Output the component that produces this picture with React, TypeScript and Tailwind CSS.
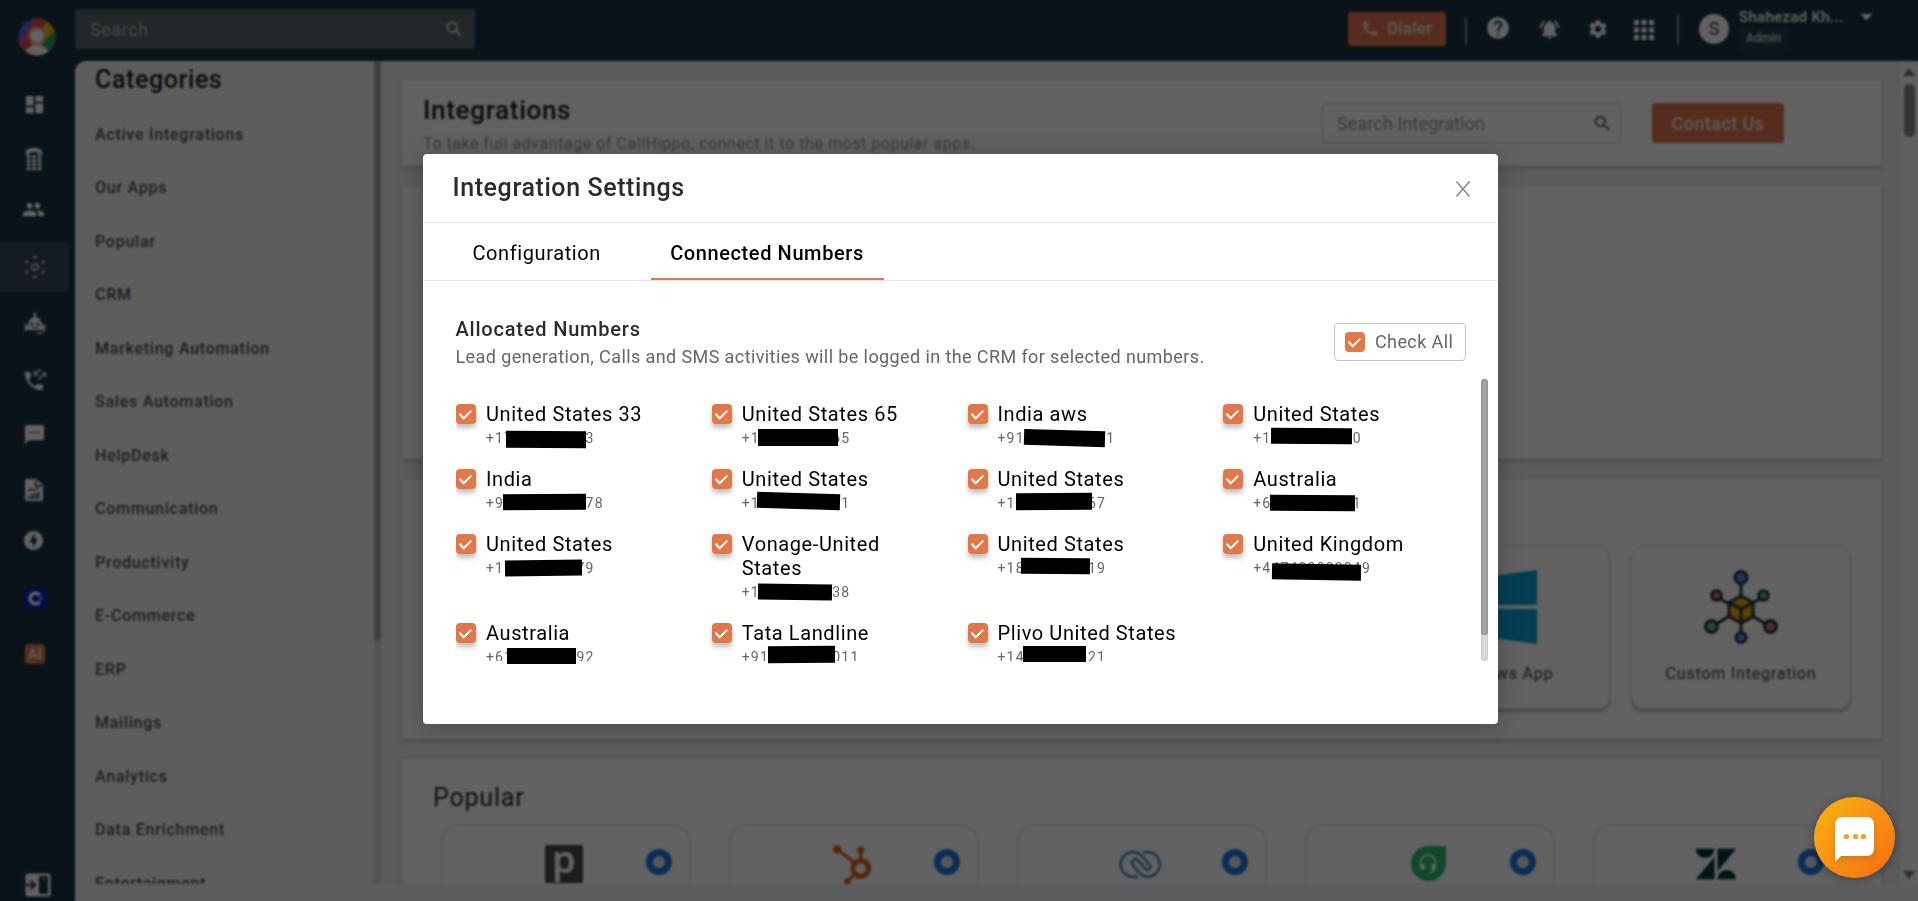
import type { ReactNode } from 'react';
import {
  MdApps,
  MdArrowDropDown,
  MdCall,
  MdDashboard,
  MdHelp,
  MdNotificationsActive,
  MdOfflineBolt,
  MdPeople,
  MdSearch,
  MdSettings,
  MdSms,
} from 'react-icons/md';
import { SiHubspot, SiZendesk } from 'react-icons/si';

const categories = [
  'Active Integrations',
  'Our Apps',
  'Popular',
  'CRM',
  'Marketing Automation',
  'Sales Automation',
  'HelpDesk',
  'Communication',
  'Productivity',
  'E-Commerce',
  'ERP',
  'Mailings',
  'Analytics',
  'Data Enrichment',
  'Entertainment',
];

const numbers = [
  { name: 'United States 33', number: '+17000000003' },
  { name: 'United States 65', number: '+10000000065' },
  { name: 'India aws', number: '+910000000001' },
  { name: 'United States', number: '+10000000000' },
  { name: 'India', number: '+910000000078' },
  { name: 'United States', number: '+10000000001' },
  { name: 'United States', number: '+10000000067' },
  { name: 'Australia', number: '+61000000001' },
  { name: 'United States', number: '+10000000079' },
  { name: 'Vonage-United States', number: '+10000000038' },
  { name: 'United States', number: '+18000000019' },
  { name: 'United Kingdom', number: '+447402000049' },
  { name: 'Australia', number: '+61000000092' },
  { name: 'Tata Landline', number: '+910000000011' },
  { name: 'Plivo United States', number: '+14000000021' },
];

// Bars that hide the middle digits, measured from the modal's top left corner
const masks = [
  { x: 82.5, y: 277, w: 79.5, h: 16.5, r: 0.3 },
  { x: 335.3, y: 275, w: 79.5, h: 16.5, r: 0 },
  { x: 601.3, y: 275.6, w: 80.5, h: 16, r: 1.6 },
  { x: 848, y: 273.8, w: 81.3, h: 16.3, r: 0.5 },
  { x: 80, y: 340.3, w: 83, h: 16.3, r: -0.3 },
  { x: 334, y: 338.5, w: 82.5, h: 16, r: 1.6 },
  { x: 592.6, y: 339.2, w: 76.3, h: 16.5, r: -0.2 },
  { x: 847, y: 341.2, w: 85, h: 16.3, r: 0.2 },
  { x: 81.5, y: 405.5, w: 77.3, h: 16.3, r: -0.7 },
  { x: 335.3, y: 430.2, w: 74.3, h: 16.3, r: 0.6 },
  { x: 597.7, y: 404.3, w: 69.3, h: 16.3, r: 0.6 },
  { x: 849, y: 409.7, w: 88.7, h: 16, r: 1 },
  { x: 83.5, y: 494, w: 69, h: 16.3, r: 0 },
  { x: 345.3, y: 492, w: 66.5, h: 16.5, r: -0.3 },
  { x: 600.4, y: 492, w: 62.6, h: 16.3, r: 0 },
];

function OfficePhoneIcon() {
  return (
    <svg className="h-6 w-5" viewBox="0 0 20 24" fill="currentColor">
      <path d="M1.5 7.5C1 3 5 .8 10 .8s9 2.200 8.500 6.700h-4.300V5.200H5.800v2.300z" />
      {[9, 13, 17, 21].map((y) =>
        [2.6, 8, 13.400].map((x) => <rect key={`${x}-${y}`} x={x} y={y - 0.700} width="4" height="3" rx="0.8" />),
      )}
    </svg>
  );
}

function HubIcon() {
  return (
    <svg className="h-6 w-6" viewBox="0 0 24 24" fill="currentColor">
      <circle cx="12" cy="12" r="3" fill="none" stroke="currentColor" strokeWidth="1.8" />
      <circle cx="12" cy="2.200" r="1.700" />
      <circle cx="12" cy="21.800" r="1.700" />
      <circle cx="3.800" cy="7" r="1.700" />
      <circle cx="20.200" cy="7" r="1.700" />
      <circle cx="3.800" cy="17" r="1.700" />
      <circle cx="20.200" cy="17" r="1.700" />
    </svg>
  );
}

function BotIcon() {
  return (
    <svg className="h-6 w-6" viewBox="0 0 24 24">
      <circle cx="12" cy="3" r="1.500" fill="currentColor" />
      <path d="M12 3v4" stroke="currentColor" strokeWidth="1.500" />
      <path d="M4.500 19C4.500 10 7.500 6 12 6s7.500 4 7.500 13z" fill="currentColor" />
      <rect x="1.800" y="13" width="2.400" height="7" rx="1.200" fill="currentColor" />
      <rect x="19.800" y="13" width="2.400" height="7" rx="1.200" fill="currentColor" />
      <circle cx="9" cy="13" r="1.500" fill="#1a3443" />
      <circle cx="15" cy="13" r="1.500" fill="#1a3443" />
      <path d="M9 16.500h6" stroke="#1a3443" strokeWidth="1.200" />
      <path d="M20.500 20.500c-1 1.600-3 2-7 2" stroke="currentColor" strokeWidth="1.200" fill="none" />
    </svg>
  );
}

function CallLogIcon() {
  return (
    <svg className="h-6 w-6" viewBox="0 0 24 24">
      <path
        transform="translate(-1 2)"
        d="M20 15.500c-1.200 0-2.500-.2-3.600-.6-.3-.1-.7 0-1 .2l-2.200 2.200a15 15 0 0 1-6.600-6.600l2.200-2.200c.3-.3.400-.7.200-1C8.700 6.500 8.500 5.200 8.500 4c0-.600-.400-1-1-1H4c-.600 0-1 .400-1 1 0 9.400 7.600 17 17 17 .600 0 1-.400 1-1v-3.500c0-.600-.400-1-1-1z"
        fill="currentColor"
      />
      <path d="M17.500 2l-6 5.500M11.500 4v3.800h4M15.500 12.500l6.500-6M18 6.200h4.200V10" fill="none" stroke="currentColor" strokeWidth="1.300" />
    </svg>
  );
}

function ReportIcon() {
  return (
    <svg className="h-6 w-5" viewBox="0 0 20 24">
      <path d="M3 1h9l7 6v14a2 2 0 0 1-2 2H3a2 2 0 0 1-2-2V3a2 2 0 0 1 2-2z" fill="currentColor" />
      <path d="M11.500 2.500v5.500H18" stroke="#1a3443" strokeWidth="1.500" fill="none" />
      <path d="M4 13l3-2 3 1.500 5-3" stroke="#1a3443" strokeWidth="1.200" fill="none" />
      <path d="M5.200 21v-3M8.400 21v-5M11.600 21v-6M14.600 21v-7" stroke="#1a3443" strokeWidth="1.900" />
    </svg>
  );
}

const navItems: { icon: ReactNode; className: string }[] = [
  { icon: <MdDashboard className="h-[23px] w-[23px]" />, className: 'mt-[18px]' },
  { icon: <OfficePhoneIcon />, className: 'mt-[5px] pr-0.5' },
  { icon: <MdPeople className="h-[23px] w-[23px]" />, className: 'pr-0.5' },
  { icon: <HubIcon />, className: 'mt-2 bg-[#36485a] text-[#c8c8cc]' },
  { icon: <BotIcon />, className: 'mt-1.5' },
  { icon: <CallLogIcon />, className: 'mt-1.5' },
  { icon: <MdSms className="h-[23px] w-[23px]" />, className: 'mt-[5px]' },
  { icon: <ReportIcon />, className: 'mt-1.5 pr-0.5' },
  { icon: <MdOfflineBolt className="h-[23px] w-[23px]" />, className: 'pr-0.5' },
  {
    icon: (
      <svg className="h-[21px] w-[21px]" viewBox="0 0 21 21">
        <rect width="21" height="21" rx="2" fill="#0620c8" />
        <circle cx="10.500" cy="10.500" r="5.300" fill="none" stroke="#fff" strokeWidth="3.600" />
        <path d="M8.500 10.500l9-4.500v9z" fill="#0620c8" />
        <circle cx="15.500" cy="10.500" r="1.300" fill="#fff" />
      </svg>
    ),
    className: 'mt-2 pl-0.5',
  },
  {
    icon: (
      <span className="flex h-5 w-5 items-center justify-center rounded-sm bg-[#e2784a] text-[14px] font-semibold tracking-normal text-[#eee]">
        AI
      </span>
    ),
    className: 'mt-1.5 pl-px',
  },
];

function Avatar() {
  return (
    <svg className="h-[38px] w-[38px]" viewBox="0 0 38 38">
      <clipPath id="avatar">
        <circle cx="19" cy="19" r="18.500" />
      </clipPath>
      <g clipPath="url(#avatar)">
        <rect width="38" height="38" fill="#f7b500" />
        <path d="M0 0h20L4 26H0z" fill="#3f70e8" />
        <path d="M17 0h14L4 38 0 26z" fill="#e8475b" />
        <path d="M38 13v25H16l8-14z" fill="#1da45a" />
        <path d="M0 26l14-6 4 18H0z" fill="#e8475b" />
        <path d="M12 24h14l-3 6h-8z" fill="#f0c070" />
        <circle cx="19" cy="17.500" r="9" fill="#f0a8a0" />
        <circle cx="19" cy="18" r="6.500" fill="#fff" />
        <path d="M7 38c0-8 5-10 12-10s12 2 12 10z" fill="#fff" />
      </g>
    </svg>
  );
}

function Sidebar() {
  return (
    <aside className="flex w-[75px] shrink-0 flex-col text-white">
      <div className="ml-[18px] mt-[18px] h-[38px] pb-[5px]">
        <Avatar />
      </div>
      <nav className="mt-[5px]">
        {navItems.map((item, i) => (
          <div key={i} className={`flex h-[50px] w-[69px] items-center justify-center ${item.className}`}>
            {item.icon}
          </div>
        ))}
      </nav>
      <svg className="mb-1 ml-[25px] mt-auto h-6 w-[26px]" viewBox="0 0 26 24">
        <rect x="0.500" y="0.500" width="25" height="23" rx="2" fill="#fff" />
        <rect x="14" y="3" width="9" height="18" fill="#1a3443" />
        <path d="M17 5l1.500 1.500L20 5" stroke="#fff" fill="none" />
        <path d="M0 12h9M5.500 7.500L10 12l-4.500 4.500" stroke="#1a3443" strokeWidth="2" fill="none" />
      </svg>
    </aside>
  );
}

function TopBar() {
  return (
    <header className="flex h-[61px] shrink-0 items-start text-white">
      <div className="mt-[9px] flex h-10 w-[400px] items-center justify-between rounded bg-[#586669] px-[15px] pr-2.5">
        <span className="mt-px text-lg tracking-[0.5px] text-[#b4babd]">Search</span>
        <MdSearch className="mt-px h-[21px] w-[21px] text-[#e0e0e0]" />
      </div>
      <button className="ml-[873px] mt-3 flex h-[34px] w-[98px] items-center justify-center gap-2 rounded bg-[#e2784a] text-base font-medium tracking-[0.6px] text-[#f0e8e4]">
        <MdCall className="h-[18px] w-[18px]" />
        Dialer
      </button>
      <div className="ml-[19px] mt-[17px] h-[27px] w-0.5 bg-[#8b979d]" />
      <MdHelp className="ml-[18px] mt-[15px] h-[26px] w-[26px]" />
      <MdNotificationsActive className="ml-[27px] mt-[18px] h-[23px] w-[23px]" />
      <MdSettings className="ml-[26px] mt-[18px] h-[22px] w-[22px]" />
      <MdApps className="ml-5 mt-[15px] h-[30px] w-[30px]" />
      <div className="ml-[18px] mt-[15px] h-[29px] w-0.5 bg-[#8b979d]" />
      <div className="ml-5 mt-3.5 flex h-[30px] w-[30px] items-center justify-center rounded-full bg-white text-lg text-[#444]">
        S
      </div>
      <div className="ml-[10px] mt-[7px] w-[106px]">
        <div className="text-[15px] leading-5 font-medium tracking-[0.3px] whitespace-nowrap">Shahezad Kh...</div>
        <div className="mt-px h-[22px] w-[49px] rounded bg-[#233c4a] text-center text-xs leading-[21px] font-medium text-[#d0d4d6]">
          Admin
        </div>
      </div>
      <MdArrowDropDown className="ml-[7px] mt-[2px] h-[29px] w-[29px]" />
    </header>
  );
}

function Categories() {
  return (
    <div className="flex h-[823px] w-[306px] shrink-0 overflow-hidden bg-[#f5f5f5]">
      <div className="w-[299px] pl-5">
        <h2 className="mt-[3px] text-[25px] leading-8 font-medium tracking-[0.6px] text-[#1c1c1c]">Categories</h2>
        <ul className="mt-[11.500px]">
          {categories.map((category) => (
            <li key={category} className="h-[53.5px] text-base leading-[53.5px] font-medium tracking-[0.75px] text-[#505050]">
              {category}
            </li>
          ))}
        </ul>
      </div>
      <div className="w-[7px] bg-[#d8d8d8]">
        <div className="h-[580px] rounded-b bg-[#a8a8a8]" />
      </div>
    </div>
  );
}

function PipedriveLogo() {
  return (
    <div className="flex h-[38px] w-[38px] items-start justify-center rounded-xs bg-[#4a4a4a] font-['Noto_Sans'] text-[38px] leading-[27px] font-semibold text-white">
      p
    </div>
  );
}

function ZohoLogo() {
  return (
    <svg className="mt-[5px] h-[28px] w-[42px]" viewBox="0 0 42 28" fill="none" stroke="#3e87bf" strokeWidth="2.500">
      <path d="M18.500 26.200c-1.300.4-2.600.5-4.500.5A12.300 12.300 0 0 1 14 2c4.500 0 7 1.800 9.500 4.800l7 8.200c2.500 3.200-1.700 6.600-4.300 3.600l-7-8.200c-3-3.500-8.500.6-5.400 4.600l6 7.200c2.500 3 5 4.500 8.700 4.500a12.300 12.300 0 0 0 0-24.700c-2 0-3.200.2-4.500.6" />
    </svg>
  );
}

function FreshdeskLogo() {
  return (
    <div className="mt-px flex h-[35px] w-[35px] items-center justify-center rounded-full rounded-tr-[3px] bg-[#25c16f]">
      <svg className="h-[20px] w-[18px]" viewBox="0 0 18 20" fill="none" stroke="#fff">
        <path d="M1.800 11V8.200a7.200 7.200 0 0 1 14.400 0V11" strokeWidth="1.700" />
        <path d="M1 10h3.200c1 0 1.600.6 1.600 1.600v2.800c0 1-.6 1.600-1.600 1.600C2 16 1 14 1 12zM17 10h-3.200c-1 0-1.600.6-1.600 1.600v2.800c0 1 .6 1.600 1.600 1.600 2.200 0 3.200-2 3.200-4z" fill="#fff" stroke="none" />
        <path d="M15.200 15c0 2.600-1.600 3.600-5 3.600" strokeWidth="1.500" />
      </svg>
    </div>
  );
}

function CustomIntegrationLogo() {
  return (
    <svg className="h-[76px] w-[76px]" viewBox="0 0 76 76" stroke="#1d3446" strokeWidth="3">
      <path d="M38 10v24M14 28l14 8M60 28l-14 8M10 57l18-11M66 57l-18-11M38 40v26" />
      <path d="M38 27l12 6.500v14L38 54l-12-6.500v-14z" fill="#f5a800" />
      <path d="M26 33.500L38 40l12-6.500M38 40v14" fill="none" />
      <circle cx="38" cy="8.500" r="6" fill="#5f8de8" />
      <circle cx="13.500" cy="26.500" r="4.800" fill="#e0697a" />
      <circle cx="60.500" cy="26.500" r="4.800" fill="#4fbf83" />
      <circle cx="8.500" cy="57.500" r="6" fill="#4fbf83" />
      <circle cx="67.500" cy="57.500" r="6" fill="#e0697a" />
      <circle cx="38" cy="68.500" r="5" fill="#5f8de8" />
    </svg>
  );
}

const popularLogos = [
  <PipedriveLogo key="pipedrive" />,
  <SiHubspot key="hubspot" className="h-10 w-10 text-[#e0661a]" />,
  <ZohoLogo key="zoho" />,
  <FreshdeskLogo key="freshdesk" />,
  <SiZendesk key="zendesk" className="-mt-px h-10 w-10 text-[#03363d]" />,
];

function AppCard({ label, children }: { label: string; children: ReactNode }) {
  return (
    <div className="flex h-[163px] w-[220px] flex-col items-center rounded-xl border border-[#dedede] bg-white pt-[22px] shadow-[0_3px_3px_rgba(0,0,0,0.25)]">
      <div className="flex h-[76px] items-center">{children}</div>
      <div className="mt-[17px] text-base tracking-[0.8px] text-[#444]">{label}</div>
    </div>
  );
}

function MainContent() {
  return (
    <main className="flex h-[823px] w-[1519px] shrink-0 flex-col gap-5 overflow-hidden pl-[21px] pt-5">
      <section className="flex h-[85px] w-[1479px] shrink-0 items-start bg-white pl-[21px] shadow-[0_2px_4px_rgba(0,0,0,0.2)]">
        <div className="w-[899px]">
          <h1 className="mt-[13px] text-[26px] leading-8 font-medium tracking-[0.7px] text-[#1c1c1c]">Integrations</h1>
          <p className="mt-[6px] text-base leading-6 tracking-[0.55px] text-[#9c9c9c]">
            To take full advantage of CallHippo, connect it to the most popular apps.
          </p>
        </div>
        <div className="mt-[22px] flex h-10 w-[299px] items-center justify-between rounded border border-[#d9d9d9] pl-3.5 pr-[7px]">
          <span className="mt-px text-lg tracking-[0.1px] text-[#a0a0a0]">Search Integration</span>
          <MdSearch className="h-[21px] w-[21px] text-[#555]" />
        </div>
        <button className="ml-[31px] mt-[22px] h-10 w-[132px] rounded bg-[#e2784a] pt-px text-lg font-medium tracking-[0.4px] text-[#f0e8e4]">
          Contact Us
        </button>
      </section>
      <section className="h-[273px] w-[1479px] shrink-0 bg-white shadow-[0_2px_4px_rgba(0,0,0,0.2)]" />
      <section className="flex h-[260px] w-[1479px] shrink-0 items-start justify-end gap-[21px] bg-white pr-[30px] pt-[67px] shadow-[0_2px_4px_rgba(0,0,0,0.2)]">
        <AppCard label="Windows App">
          <svg className="h-[74px] w-[74px]" viewBox="0 0 74 74" fill="#0da3dc">
            <path d="M0 10l31-4v29H0zM34 5.500L74 0v35H34zM0 39h31v29L0 64zM34 39h40v35l-40-5.500z" />
          </svg>
        </AppCard>
        <AppCard label="Custom Integration">
          <CustomIntegrationLogo />
        </AppCard>
      </section>
      <section className="h-[200px] w-[1479px] shrink-0 bg-white shadow-[0_2px_4px_rgba(0,0,0,0.2)]">
        <h2 className="ml-[31px] mt-[23px] text-[25px] leading-8 tracking-[0.8px] text-[#2b2b2b]">Popular</h2>
        <div className="ml-10 mt-[11px] flex gap-10">
          {popularLogos.map((logo, i) => (
            <div key={i} className="relative flex h-[140px] w-[248px] justify-center rounded-2xl border border-[#dedede] pr-1 pt-[19px] shadow-[0_1px_3px_rgba(0,0,0,0.1)]">
              {logo}
              <span className="absolute right-[17px] top-[23px] h-[26px] w-[26px] rounded-full border-[7px] border-[#2276dc] bg-[#e0e8f4]" />
            </div>
          ))}
        </div>
      </section>
    </main>
  );
}

function Checkbox({ shadow = true }: { shadow?: boolean }) {
  return (
    <span
      className={`flex h-5 w-5 shrink-0 items-center justify-center rounded bg-[#e2784a] ${
        shadow ? 'shadow-[0_4px_5px_rgba(0,0,0,0.25)]' : ''
      }`}
    >
      <svg className="h-5 w-5" viewBox="0 0 20 20" fill="none" stroke="#fff" strokeWidth="2">
        <path d="M3.500 9.800l4.200 4.400 7.600-7.600" />
      </svg>
    </span>
  );
}

function IntegrationModal() {
  return (
    <div className="absolute left-[423px] top-[154px] h-[570px] w-[1075px] rounded bg-white shadow-[0_4px_24px_rgba(0,0,0,0.25)]">
      <div className="flex h-[69px] items-start justify-between border-b border-[#e8e8e8] pl-[29.500px] pr-[27px]">
        <h3 className="mt-[18px] text-[25px] leading-8 font-medium tracking-[0.6px] text-[#2b2b2b]">Integration Settings</h3>
        <svg className="mt-[27px] h-4 w-4" viewBox="0 0 16 16" stroke="#888" strokeWidth="1.500">
          <path d="M1.500 .5l13 15M14.500 .5l-13 15" />
        </svg>
      </div>
      <div className="flex h-[58px] border-b border-[#e8e8e8] text-xl leading-[60px] text-black">
        <div className="w-[227.500px] pl-[49.500px] tracking-[0.6px]">Configuration</div>
        <div className="h-[57px] w-[233px] border-b-2 border-[#e2784a] text-center font-medium tracking-[0.6px]">Connected Numbers</div>
      </div>
      <div className="flex items-start justify-between pl-[32.500px] pr-8">
        <div className="mt-[34px]">
          <h4 className="text-xl leading-7 font-medium tracking-[0.8px] text-[#2b2b2b]">Allocated Numbers</h4>
          <p className="text-lg leading-7 tracking-[0.4px] text-[#666]">
            Lead generation, Calls and SMS activities will be logged in the CRM for selected numbers.
          </p>
        </div>
        <label className="mt-[42px] flex h-[38px] w-[132px] items-center rounded border border-[#c4c4c4] pl-2.5">
          <Checkbox shadow={false} />
          <span className="ml-2.5 text-lg tracking-[0.4px] text-[#666]">Check All</span>
        </label>
      </div>
      <div className="mt-2 flex h-[282px] justify-between pl-[33px] pr-2.5">
        <div className="grid h-[282px] w-[1023px] grid-cols-4 content-start overflow-hidden pt-[25px]">
          {numbers.map((item, i) => (
            <div key={i} className="flex pb-[21px]">
              <Checkbox />
              <div className="-mt-[2px] ml-2.5 max-w-[190px]">
                <div className="text-xl leading-6 tracking-[0.6px] text-black">{item.name}</div>
                <div className="mb-[2px] h-5 text-sm leading-[24px] tracking-[1.180px] text-[#666]">{item.number}</div>
              </div>
            </div>
          ))}
        </div>
        <div className="h-[282px] w-[7px] rounded-full bg-[#dcdcdc] shadow-[inset_0_0_3px_rgba(0,0,0,0.2)]">
          <div className="h-64 w-[7px] rounded-full bg-[#a6a6a6] shadow-[inset_0_0_3px_rgba(0,0,0,0.3)]" />
        </div>
      </div>
      {masks.map((mask, i) => (
        <span
          key={i}
          className="absolute bg-black"
          style={{ left: mask.x, top: mask.y, width: mask.w, height: mask.h, transform: `rotate(${mask.r}deg)` }}
        />
      ))}
    </div>
  );
}

function ChatButton() {
  return (
    <button className="absolute bottom-[23px] right-[23px] flex h-[81px] w-[81px] items-center justify-center rounded-full bg-linear-to-br from-[#f6b512] to-[#f66a12] shadow-[0_2px_8px_rgba(0,0,0,0.35)]">
      <svg className="mt-1 h-[46px] w-[39px] drop-shadow-md" viewBox="0 0 39 46">
        <path d="M7 0h25a7 7 0 0 1 7 7v25a7 7 0 0 1-7 7H6l-6 6V7a7 7 0 0 1 7-7z" fill="#fff" />
        <circle cx="11.500" cy="19.500" r="2.600" fill="#f5a012" />
        <circle cx="20.500" cy="19.500" r="2.600" fill="#f5a012" />
        <circle cx="28.500" cy="19.500" r="2.600" fill="#f5a012" />
      </svg>
    </button>
  );
}

export default function App() {
  return (
    <div className="relative h-[901px] w-[1918px] overflow-hidden bg-[#1a3443] font-[Roboto,sans-serif]">
      <div className="flex h-[901px]">
        <Sidebar />
        <div className="flex w-[1843px] flex-col">
          <TopBar />
          <div className="h-[840px] overflow-hidden rounded-tl-xl bg-[#f4f4fa]">
            <div className="flex h-[824px] bg-[#eeeeee]">
              <Categories />
              <MainContent />
              <div className="flex w-[18px] flex-col items-center bg-[#fbfbfb] pt-[7px]">
                <svg className="h-2 w-3" viewBox="0 0 12 8" fill="#777">
                  <path d="M6 0l6 8H0z" />
                </svg>
                <div className="mt-2 h-[53px] w-[11px] rounded-full bg-[#888]" />
                <svg className="mb-1.5 mt-auto h-2 w-3" viewBox="0 0 12 8" fill="#777">
                  <path d="M0 0h12L6 8z" />
                </svg>
              </div>
            </div>
          </div>
        </div>
      </div>
      <div className="absolute inset-0 bg-black/62 backdrop-blur-[1px]" />
      <IntegrationModal />
      <ChatButton />
    </div>
  );
}
